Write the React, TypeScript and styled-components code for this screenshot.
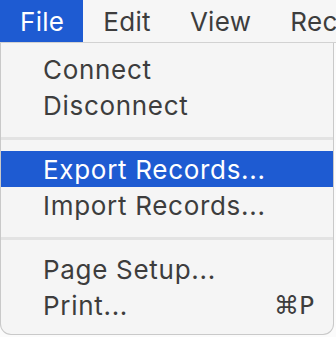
import React from 'react';
import styled, { createGlobalStyle } from 'styled-components';

const GlobalStyle = createGlobalStyle`
  html, body {
    margin: 0;
    padding: 0;
    background: #fbfbfb;
    font-family: Inter, "Noto Sans", "DejaVu Sans", sans-serif;
    -webkit-font-smoothing: antialiased;
  }
`;

const Screen = styled.div`
  width: 336px;
  height: 337px;
  overflow: hidden;
  display: flex;
  flex-direction: column;
`;

const MenuBar = styled.div`
  display: flex;
  height: 42px;
  background: #f6f6f6;
  border-bottom: 1px solid #d2d2d2;
  white-space: nowrap;
`;

const BarItem = styled.div<{ $active?: boolean }>`
  display: flex;
  align-items: center;
  padding: 0 19px 0 20px;
  font-size: 26px;
  letter-spacing: 0.3px;
  color: ${({ $active }) => ($active ? '#ffffff' : '#3d3d3d')};
  background: ${({ $active }) => ($active ? '#1e5bd2' : 'transparent')};
`;

const Dropdown = styled.div`
  width: 332px;
  background: #f5f5f5;
  border: 1px solid #c9c9c9;
  border-top: none;
  border-radius: 0 0 11px 11px;
  padding: 8px 0 11px;
  display: flex;
  flex-direction: column;
`;

const Item = styled.div<{ $active?: boolean }>`
  display: flex;
  align-items: center;
  justify-content: space-between;
  height: 36px;
  padding: 0 19px 0 42px;
  font-size: 26px;
  letter-spacing: 0.7px;
  color: ${({ $active }) => ($active ? '#ffffff' : '#3d3d3d')};
  background: ${({ $active }) => ($active ? '#1e5bd2' : 'transparent')};
`;

const Shortcut = styled.span`
  font-family: "DejaVu Sans", Inter, sans-serif;
  font-size: 25px;
  letter-spacing: 0;
  color: #3d3d3d;
`;

const Separator = styled.div`
  height: 3px;
  margin: 14px 0 11px;
  background: #e3e3e3;
`;

const menus = ['File', 'Edit', 'View', 'Records'];

export default function App() {
  return (
    <Screen>
      <GlobalStyle />
      <MenuBar>
        {menus.map((m, i) => (
          <BarItem key={m} $active={i === 0}>{m}</BarItem>
        ))}
      </MenuBar>
      <Dropdown>
        <Item>Connect</Item>
        <Item>Disconnect</Item>
        <Separator />
        <Item $active>Export Records...</Item>
        <Item>Import Records...</Item>
        <Separator />
        <Item>Page Setup...</Item>
        <Item>
          <span>Print...</span>
          <Shortcut>⌘P</Shortcut>
        </Item>
      </Dropdown>
    </Screen>
  );
}
